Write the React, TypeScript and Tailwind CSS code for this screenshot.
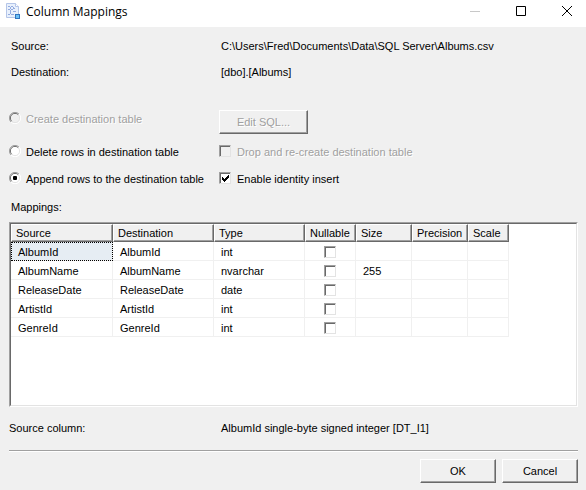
import type { ReactNode } from "react";

const columns = [
  { name: "Source", width: "w-[102px]" },
  { name: "Destination", width: "w-[101px]" },
  { name: "Type", width: "w-[91px]" },
  { name: "Nullable", width: "w-[51px]" },
  { name: "Size", width: "w-[56px]" },
  { name: "Precision", width: "w-[56px]" },
  { name: "Scale", width: "w-[41px]" },
];

const rows = [
  { source: "AlbumId", type: "int", size: "" },
  { source: "AlbumName", type: "nvarchar", size: "255" },
  { source: "ReleaseDate", type: "date", size: "" },
  { source: "ArtistId", type: "int", size: "" },
  { source: "GenreId", type: "int", size: "" },
];

function WindowIcon() {
  return (
    <svg width="16" height="16" viewBox="0 0 16 16" aria-hidden="true">
      <path d="M.5.500h9l3 3V14.500H.5z" fill="#e8f0fc" stroke="#b4c5e8" />
      <path d="M9.500.500v3h3" fill="#fff" stroke="#b4c5e8" />
      <path d="M2 3.500h2M2 6.500h2M2 11.500h2M4.500 4v2M4.500 7v4M5 3.500h2M5 6.500h2M7.500 4v1M7 8.500h3M5 11.500h3M7 5.500h2" stroke="#93abe0" fill="none" />
      <rect x="9" y="11" width="5" height="5" fill="#2f74c0" />
      <rect x="10" y="12" width="3" height="3" fill="#6cc0f4" />
    </svg>
  );
}

function CheckBox({ id, label, checked, disabled }: { id?: string; label?: string; checked?: boolean; disabled?: boolean }) {
  return (
    <span className="relative block size-3 shrink-0">
      <input
        type="checkbox"
        id={id}
        aria-label={label}
        defaultChecked={checked}
        disabled={disabled}
        className="peer block size-3 appearance-none border border-t-[#a0a0a0] border-l-[#a0a0a0] border-r-[#e3e3e3] border-b-[#e3e3e3] bg-white shadow-[inset_1px_1px_0_#696969] disabled:bg-[#f0f0f0]"
      />
      <svg
        viewBox="0 0 12 12"
        className="pointer-events-none absolute inset-0 hidden size-3 peer-checked:block"
        shapeRendering="crispEdges"
        aria-hidden="true"
      >
        <path d="M3 5h1v3h-1zM4 6h1v3h-1zM5 7h1v3h-1zM6 6h1v3h-1zM7 5h1v3h-1zM8 4h1v3h-1zM9 3h1v3h-1z" />
      </svg>
    </span>
  );
}

function Radio({ id, checked, disabled }: { id: string; checked?: boolean; disabled?: boolean }) {
  return (
    <span className="relative block size-3 shrink-0">
      <input type="radio" name="mode" id={id} defaultChecked={checked} disabled={disabled} className="peer block size-3 appearance-none rounded-full bg-white disabled:bg-[#f0f0f0]" />
      <svg viewBox="0 0 12 12" className="pointer-events-none absolute inset-0 size-3 peer-checked:[&_rect]:opacity-100" fill="none" aria-hidden="true">
        <path d="M2 10A5.500 5.500 0 0 1 10 2" stroke="#a0a0a0" />
        <path d="M2.700 9.300A4.500 4.500 0 0 1 9.300 2.700" stroke="#696969" />
        <path d="M10 2A5.500 5.500 0 0 1 2 10" stroke="#fff" />
        <path d="M9.300 2.700A4.500 4.500 0 0 1 2.700 9.300" stroke="#e3e3e3" />
        <rect x="4" y="4" width="4" height="4" rx="1" fill="#000" className="opacity-0" />
      </svg>
    </span>
  );
}

function Button({ children, disabled, className }: { children: ReactNode; disabled?: boolean; className: string }) {
  return (
    <button
      type="button"
      disabled={disabled}
      className={`h-6 border border-t-white border-l-white border-r-[#696969] border-b-[#696969] bg-[#f0f0f0] shadow-[inset_-1px_-1px_0_#a0a0a0] disabled:text-[#a0a0a0] ${className}`}
    >
      {children}
    </button>
  );
}

const disabledText = "text-[#a0a0a0] [text-shadow:1px_1px_0_#fff]";

export default function App() {
  return (
    <main className="flex min-h-screen flex-col bg-[#f0f0f0] font-['Liberation_Sans',Arial,sans-serif] text-[11px] leading-4 text-black">
      <header className="flex h-[27px] items-start gap-2 bg-white pl-1.5">
        <div className="flex grow items-start gap-1 pt-[3px]">
          <WindowIcon />
          <h1 className="font-['Open_Sans','Noto_Sans',sans-serif] text-xs leading-[18px]">Column Mappings</h1>
        </div>
        <button type="button" aria-label="Minimize" disabled className="flex h-[22px] w-[38px] items-center justify-center text-[#c8c8c8]">
          <svg width="10" height="10" stroke="currentColor" aria-hidden="true"><path d="M0 5.500h10" /></svg>
        </button>
        <button type="button" aria-label="Maximize" className="flex h-[22px] w-[38px] items-center justify-center">
          <svg width="10" height="10" fill="none" stroke="#000" aria-hidden="true"><path d="M.5.5h9v9h-9z" /></svg>
        </button>
        <button type="button" aria-label="Close" className="flex h-[22px] w-[38px] items-center justify-center">
          <svg width="10" height="10" stroke="#000" aria-hidden="true"><path d="M0 0l10 10M10 0L0 10" /></svg>
        </button>
      </header>

      <div className="flex grow flex-col px-2 pt-[11px] pb-[7px]">
        <dl className="grid grid-cols-[210px_1fr] gap-y-2.5 pl-[3px]">
          <dt>Source:</dt>
          <dd>C:\Users\Fred\Documents\Data\SQL Server\Albums.csv</dd>
          <dt>Destination:</dt>
          <dd>[dbo].[Albums]</dd>
        </dl>

        <div className="mt-[30px] grid grid-cols-[210px_1fr] pl-px [&_label]:pt-0.5">
          <div className="flex h-4 items-center gap-[5px]">
            <Radio id="create" disabled />
            <label htmlFor="create" className={disabledText}>Create destination table</label>
          </div>
          <div>
            <Button disabled className="w-[89px] [text-shadow:1px_1px_0_#fff]">Edit SQL...</Button>
          </div>
          <div className="mt-[5px] flex h-6 items-center gap-[5px]">
            <Radio id="delete" />
            <label htmlFor="delete">Delete rows in destination table</label>
          </div>
          <div className="mt-[5px] flex h-6 items-center gap-1.5">
            <CheckBox id="drop" disabled />
            <label htmlFor="drop" className={disabledText}>Drop and re-create destination table</label>
          </div>
          <div className="mt-[3px] flex h-6 items-center gap-[5px]">
            <Radio id="append" checked />
            <label htmlFor="append">Append rows to the destination table</label>
          </div>
          <div className="mt-[3px] flex h-6 items-center gap-1.5">
            <CheckBox id="identity" checked />
            <label htmlFor="identity">Enable identity insert</label>
          </div>
        </div>

        <h2 id="mappings" className="mt-[9px] pl-[3px]">Mappings:</h2>

        <div className="mt-[7px] ml-px flex grow flex-col border border-t-[#a0a0a0] border-l-[#a0a0a0] border-r-white border-b-white">
          <div className="grow border border-t-[#696969] border-l-[#696969] border-r-[#e3e3e3] border-b-[#e3e3e3] bg-white">
            <table aria-labelledby="mappings" className="w-[498px] table-fixed border-separate border-spacing-0">
              <thead>
                <tr>
                  {columns.map((c) => (
                    <th key={c.name} className={`h-[18px] border border-t-white border-l-white border-r-[#696969] border-b-[#696969] bg-[#f0f0f0] p-0 pl-1 text-left font-normal shadow-[inset_-1px_-1px_0_#a0a0a0] ${c.width}`}>
                      {c.name}
                    </th>
                  ))}
                </tr>
              </thead>
              <tbody className="[&_td]:h-[19px] [&_td]:border-r [&_td]:border-b [&_td]:border-[#f0f0f0] [&_td]:p-0 [&_td]:pt-0.5 [&_td]:pl-[7px]">
                {rows.map((r, i) => (
                  <tr key={r.source}>
                    <td className={i === 0 ? "bg-[#e6edf3] outline-1 outline-dotted -outline-offset-1 outline-black" : ""}>{r.source}</td>
                    <td>{r.source}</td>
                    <td>{r.type}</td>
                    <td>
                      <div className="pl-3"><CheckBox label={`${r.source} nullable`} /></div>
                    </td>
                    <td>{r.size}</td>
                    <td />
                    <td />
                  </tr>
                ))}
              </tbody>
            </table>
          </div>
        </div>

        <dl className="mt-[13px] grid grid-cols-[212px_1fr] pl-px">
          <dt>Source column:</dt>
          <dd>AlbumId single-byte signed integer [DT_I1]</dd>
        </dl>
        <hr className="mt-3.5 ml-px h-0.5 border-t border-b border-t-[#a0a0a0] border-b-white" />
        <footer className="mt-[7px] flex justify-end gap-1.5">
          <Button className="w-[76px]">OK</Button>
          <Button className="w-[76px]">Cancel</Button>
        </footer>
      </div>
    </main>
  );
}
